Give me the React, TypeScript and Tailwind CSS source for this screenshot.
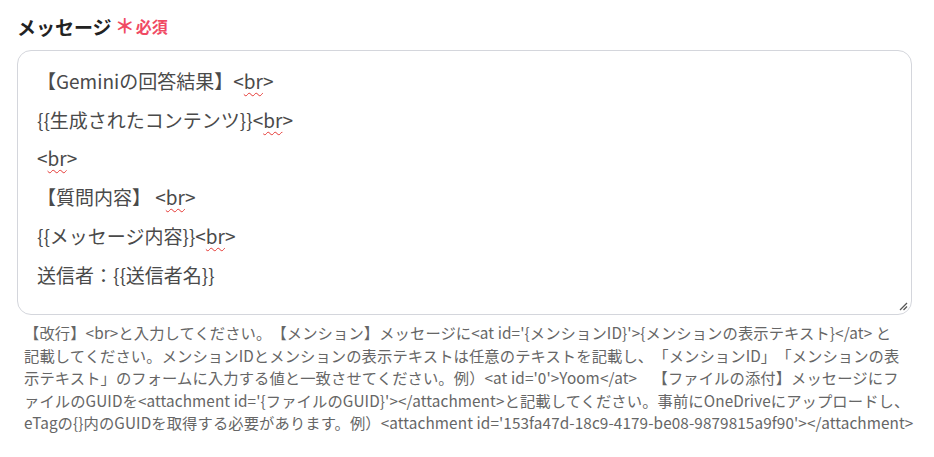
import React from "react";

const Br = () => (
  <span>
    &lt;
    <span className="underline decoration-wavy decoration-[#e53935] underline-offset-[3px] decoration-[1px]">br</span>
    &gt;
  </span>
);

export default function App() {
  const font = { fontFamily: '"Noto Sans CJK JP", "Noto Sans", sans-serif' };
  return (
    <div className="w-[934px] h-[457px] bg-white pt-[14px] pl-[17px] pr-[22px] [text-spacing-trim:space-all]" style={font}>
      <div className="flex items-center h-[24px]">
        <span className="text-[19px] font-bold text-[#222222] leading-none">メッセージ</span>
        <span className="ml-[3px] text-[20px] font-bold text-[#f04a63] leading-none">＊</span>
        <span className="ml-[1px] text-[16px] font-bold text-[#f04a63] leading-none">必須</span>
      </div>
      <div className="relative mt-[12px] h-[265px] border border-[#d4d6dc] rounded-[14px] pl-[19px] pt-[11px] text-[19px] leading-[38.7px] text-[#4a4a4a]">
        <div>【Geminiの回答結果】<Br /></div>
        <div>{"{{生成されたコンテンツ}}"}<Br /></div>
        <div><Br /></div>
        <div>【質問内容】 <Br /></div>
        <div>{"{{メッセージ内容}}"}<Br /></div>
        <div>送信者：{"{{送信者名}}"}</div>
        <svg className="absolute right-[3px] bottom-[3px]" width="10" height="10" viewBox="0 0 10 10">
          <line x1="9" y1="2" x2="2" y2="9" stroke="#555" strokeWidth="1.2" />
          <line x1="9" y1="5.5" x2="5.5" y2="9" stroke="#555" strokeWidth="1.2" />
        </svg>
      </div>
      <div className="mt-[6px] pl-[7px] text-[15.3px] leading-[22.5px] tracking-[0.1px] text-[#666666] whitespace-nowrap">
        <div>{"【改行】<br>と入力してください。【メンション】メッセージに<at id='{メンションID}'>{メンションの表示テキスト}</at> と"}</div>
        <div>{"記載してください。メンションIDとメンションの表示テキストは任意のテキストを記載し、「メンションID」「メンションの表"}</div>
        <div>{"示テキスト」のフォームに入力する値と一致させてください。例）<at id='0'>Yoom</at>　【ファイルの添付】メッセージにフ"}</div>
        <div>{"ァイルのGUIDを<attachment id='{ファイルのGUID}'></attachment>と記載してください。事前にOneDriveにアップロードし、"}</div>
        <div>{"eTagの{}内のGUIDを取得する必要があります。例）<attachment id='153fa47d-18c9-4179-be08-9879815a9f90'></attachment>"}</div>
      </div>
    </div>
  );
}
